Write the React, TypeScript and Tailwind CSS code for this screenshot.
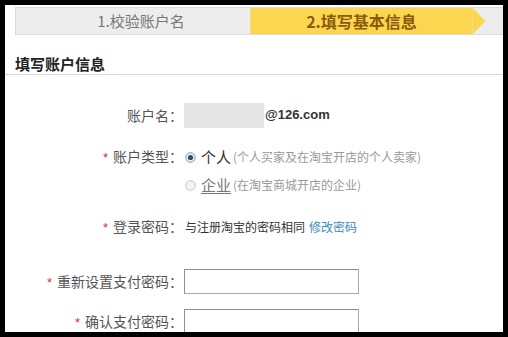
import React from "react";

function Label({ text, star }: { text: string; star?: boolean }) {
  return (
    <div className="w-[178px] shrink-0 text-right text-[14px] leading-[20px] text-[#555]">
      {star && <span className="text-[#c33] mr-[5px] font-['Liberation_Sans',sans-serif] text-[13px]">*</span>}
      {text}
    </div>
  );
}

function Radio({ checked }: { checked?: boolean }) {
  return (
    <svg width="11" height="11" viewBox="0 0 11 11" className="shrink-0">
      <circle cx="5.5" cy="5.5" r="4.8" fill={checked ? "#e9eef3" : "#f4f4f4"} stroke={checked ? "#8e9aa6" : "#c4c4c4"} strokeWidth="1" />
      {checked && <circle cx="5.5" cy="5.5" r="2.6" fill="#2f4f6f" />}
    </svg>
  );
}

export default function App() {
  return (
    <div className="w-[508px] h-[337px] bg-black pt-[5px] pl-[5px] overflow-hidden">
      <div className="w-[498px] h-[327px] bg-white overflow-hidden font-['Noto_Sans_CJK_SC','Microsoft_YaHei',sans-serif]">
        {/* steps */}
        <div className="mt-[2px] ml-[10px] h-[28px] flex bg-[#ededed] border-y border-l border-[#dcdcdc]">
          <div className="w-[234px] h-full flex items-center justify-center pl-[16px] text-[15px] text-[#777]">
            1.校验账户名
          </div>
          <div className="h-full flex items-stretch">
            <div className="w-[222px] h-full bg-[#fdd651] border-l border-[#f0dc8c] flex items-center justify-center text-[16px] font-bold text-[#8a5b0c]">
              2.填写基本信息
            </div>
            <svg width="14" height="26" viewBox="0 0 14 26" className="shrink-0">
              <polygon points="0,0 1,0 13.5,13 1,26 0,26" fill="#fdd651" stroke="#f3e3a0" strokeWidth="1" />
            </svg>
          </div>
        </div>

        {/* heading */}
        <div className="mt-[19px] h-[20px] flex items-center pl-[10px] text-[15px] font-bold text-[#222] leading-[20px]">
          填写账户信息
        </div>
        <div className="h-px bg-[#d6d6d6]" />

        {/* row 1 */}
        <div className="mt-[27px] h-[26px] flex items-center">
          <Label text="账户名：" />
          <div className="ml-[1px] w-[80px] h-[25px] bg-[#e6e6e6]" />
          <span className="ml-[1px] text-[13px] font-bold text-[#333] font-['Liberation_Sans',Arial,sans-serif]">@126.com</span>
        </div>

        {/* row 2 */}
        <div className="mt-[17px] h-[24px] flex items-center">
          <Label text="账户类型：" star />
          <div className="ml-[2px] flex items-center">
            <Radio checked />
            <span className="ml-[5px] text-[15px] text-[#333] leading-[20px]">个人</span>
            <span className="ml-[2px] text-[12px] text-[#999] leading-[20px]">(个人买家及在淘宝开店的个人卖家)</span>
          </div>
        </div>

        {/* row 3 */}
        <div className="mt-[4px] h-[24px] flex items-center">
          <div className="w-[178px] shrink-0" />
          <div className="ml-[2px] flex items-center">
            <Radio />
            <span className="ml-[5px] text-[15px] text-[#777] underline underline-offset-2 leading-[20px]">企业</span>
            <span className="ml-[2px] text-[12px] text-[#999] leading-[20px]">(在淘宝商城开店的企业)</span>
          </div>
        </div>

        {/* row 4 */}
        <div className="mt-[18px] h-[24px] flex items-center">
          <Label text="登录密码：" star />
          <span className="ml-[2px] text-[12px] text-[#333] leading-[20px]">与注册淘宝的密码相同</span>
          <span className="ml-[4px] text-[12px] text-[#3a8db8] leading-[20px]">修改密码</span>
        </div>

        {/* row 5 */}
        <div className="mt-[30px] h-[25px] flex items-center">
          <Label text="重新设置支付密码：" star />
          <div className="ml-[1px] w-[175px] h-[25px] border border-[#a9a9a9] border-t-[#8f8f8f] border-l-[#8f8f8f] bg-white" />
        </div>

        {/* row 6 */}
        <div className="mt-[15px] h-[25px] flex items-center">
          <Label text="确认支付密码：" star />
          <div className="ml-[1px] w-[175px] h-[25px] border border-[#a9a9a9] border-t-[#8f8f8f] border-l-[#8f8f8f] bg-white" />
        </div>
      </div>
    </div>
  );
}
